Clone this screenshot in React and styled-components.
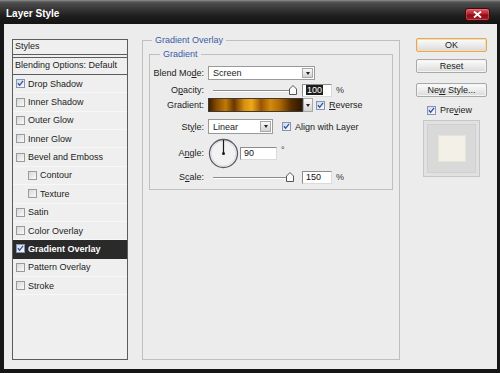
import React from 'react';
import styled, { createGlobalStyle } from 'styled-components';

const GlobalStyle = createGlobalStyle`
  html, body { margin: 0; padding: 0; background: #fff; }
  body { font-family: "Liberation Sans", Arial, sans-serif; font-size: 9px; color: #222; }
  * { box-sizing: border-box; }
`;

const Window = styled.div`
  width: 500px;
  height: 373px;
  display: flex;
  flex-direction: column;
  background: #161616;
  overflow: hidden;
`;

const TitleBar = styled.div`
  height: 24px;
  flex: none;
  display: flex;
  align-items: center;
  justify-content: space-between;
  padding: 0 10px 0 6px;
  background: linear-gradient(to bottom, #9a9a9a 0px, #6a6a6a 1px, #4c4c4c 3px, #333 10px, #1e1e1e 16px, #131313 24px);
`;

const Title = styled.span`
  color: #fff;
  font-weight: bold;
  font-size: 10px;
  margin-top: 2px;
`;

const CloseButton = styled.div`
  width: 25px;
  height: 13px;
  margin-top: 4px;
  border-radius: 3px;
  border: 1px solid #4a0608;
  background: linear-gradient(#d9626a, #b3222c 45%, #8c0c14 55%, #a8202a);
  box-shadow: inset 0 0 0 1px rgba(255, 160, 160, 0.3);
  display: flex;
  align-items: center;
  justify-content: center;
`;

const Frame = styled.div`
  flex: 1;
  display: flex;
  padding: 0 3px 4px 4px;
  min-height: 0;
`;

const Body = styled.div`
  flex: 1;
  display: flex;
  background: #ececec;
  padding: 11px 10px 9px 8px;
`;

/* ---------- left list ---------- */
const StyleList = styled.div`
  width: 116px;
  flex: none;
  margin-top: 4px;
  border: 1px solid #5c5c5c;
  background: #efefef;
  display: flex;
  flex-direction: column;
`;

const HeaderRow = styled.div`
  height: ${p => (p.$second ? 18 : 15)}px;
  flex: none;
  display: flex;
  align-items: center;
  padding: ${p => (p.$second ? '0 0 2px 2px' : '0 0 2px 2px')};
  border-bottom: 1px solid #5c5c5c;
  border-top: ${p => (p.$second ? '1px solid #5c5c5c' : 'none')};
  margin-top: ${p => (p.$second ? 2 : 0)}px;
  color: #222;
`;

const ItemRow = styled.div`
  height: 18.36px;
  flex: none;
  display: flex;
  align-items: center;
  gap: 3px;
  padding-left: ${p => (p.$indent ? 15 : 3)}px;
  background: ${p => (p.$selected ? '#2a2a2a' : 'transparent')};
  color: ${p => (p.$selected ? '#fff' : '#222')};
  font-weight: ${p => (p.$selected ? 'bold' : 'normal')};
  border-bottom: 1px solid ${p => (p.$selected ? '#2a2a2a' : '#f7f7f7')};
`;

const Box = styled.span`
  width: 9px;
  height: 9px;
  flex: none;
  border: 1px solid ${p => (p.$checked ? '#8294b8' : '#9a9a9a')};
  background: linear-gradient(135deg, #d8d8d8, #fafafa);
  display: flex;
  align-items: center;
  justify-content: center;
`;

const Checkbox = ({ checked }) => (
  <Box $checked={checked}>
    {checked && (
      <svg width="9" height="9" viewBox="0 0 9 9">
        <path d="M1.2 4.2 L3.4 6.8 L7.8 1.2" fill="none" stroke="#2b4fb5" strokeWidth="1.7" />
      </svg>
    )}
  </Box>
);

/* ---------- center groups ---------- */
const Group = styled.fieldset`
  margin: 0 0 0 14px;
  width: 258px;
  flex: none;
  min-width: 0;
  padding: 0 6px;
  border: 1px solid #bfbfbf;
`;

const InnerGroup = styled.fieldset`
  margin: 3px 0 0 0;
  min-width: 0;
  padding: 0 0 5px 0;
  border: 1px solid #bfbfbf;
`;

const Legend = styled.legend`
  padding: 0 3px;
  margin-left: ${p => p.$ml}px;
  color: #3b5ba8;
  font-size: 9px;
  line-height: 11px;
`;

const Controls = styled.div`
  display: flex;
  flex-direction: column;
  padding-top: 6px;
`;

const Row = styled.div`
  display: flex;
  align-items: center;
  height: ${p => p.$h}px;
  margin-top: ${p => p.$mt}px;
`;

const Label = styled.span`
  width: 54px;
  flex: none;
  text-align: right;
  margin-right: 4px;
  white-space: nowrap;
  color: #222;
`;

const U = styled.span`
  text-decoration: underline;
`;

const Select = styled.div`
  width: ${p => p.$w}px;
  height: ${p => p.$h}px;
  flex: none;
  background: #fff;
  border: 1px solid #9a9a9a;
  display: flex;
  align-items: center;
  justify-content: space-between;
  padding-left: 4px;
`;

const ArrowBox = styled.span`
  width: ${p => p.$w || 11}px;
  height: ${p => (p.$h ? `${p.$h}px` : 'calc(100% - 2px)')};
  margin-right: ${p => p.$mr ?? 1}px;
  flex: none;
  border: 1px solid #a8a8a8;
  background: linear-gradient(#fafafa, #d2d2d2);
  display: flex;
  align-items: center;
  justify-content: center;
  &::after {
    content: '';
    border-left: 2.5px solid transparent;
    border-right: 2.5px solid transparent;
    border-top: 3px solid #222;
  }
`;

const Swatch = styled.span`
  width: 95px;
  height: 14px;
  flex: none;
  border: 1px solid #3a3a3a;
  background: linear-gradient(
    to right,
    #3e2000 0%,
    #8a4a00 8%,
    #c07a08 18%,
    #6a3600 27%,
    #d89010 38%,
    #f0a818 46%,
    #9a5400 56%,
    #d48a0c 66%,
    #b06a04 76%,
    #5a2e00 88%,
    #2e1600 100%
  );
`;

const NumberInput = styled.span`
  width: ${p => p.$w}px;
  height: 13px;
  flex: none;
  margin-left: ${p => p.$ml}px;
  background: #fff;
  border: 1px solid;
  border-color: #8c8c8c #dadada #dadada #8c8c8c;
  padding-left: 3px;
  display: flex;
  align-items: center;
  font-size: 9px;
  color: #111;
`;

const Highlight = styled.span`
  background: #1c1c1c;
  color: #fff;
  padding: 0 1px;
  line-height: 10px;
`;

const Unit = styled.span`
  margin-left: 4px;
  align-self: ${p => (p.$top ? 'flex-start' : 'center')};
  margin-top: ${p => (p.$top ? 8 : 0)}px;
  color: #333;
`;

const Slider = styled.div`
  width: 90px;
  height: 100%;
  flex: none;
  position: relative;
  display: flex;
  align-items: center;
  padding: 0 5px;
`;

const Track = styled.div`
  flex: 1;
  height: 2px;
  margin-top: 2px;
  border-top: 1px solid #8c8c8c;
  border-bottom: 1px solid #fff;
`;

const Thumb = styled.svg`
  position: absolute;
  top: 2px;
`;

const CheckLabel = styled.span`
  display: flex;
  align-items: center;
  gap: 4px;
  margin-left: ${p => p.$ml}px;
  white-space: nowrap;
  color: #222;
`;

/* ---------- right column ---------- */
const Side = styled.div`
  width: 71px;
  flex: none;
  margin: 3px 0 0 16px;
  display: flex;
  flex-direction: column;
`;

const Button = styled.div`
  height: 14px;
  margin-top: ${p => p.$mt}px;
  border: 1px solid ${p => (p.$default ? '#e3a95c' : '#a9a9a9')};
  border-radius: 2px;
  background: linear-gradient(#fcfcfc, #ececec 50%, #dadada);
  box-shadow: ${p => (p.$default ? 'inset 0 0 0 1px #f6dcb0' : 'inset 0 0 0 1px #f4f4f4')};
  display: flex;
  align-items: center;
  justify-content: center;
  color: #222;
  font-size: 9px;
`;

const PreviewRow = styled.div`
  height: 12px;
  margin-top: 7px;
  display: flex;
  align-items: center;
  gap: 4px;
  padding-left: 11px;
`;

const PreviewBox = styled.div`
  width: 57px;
  height: 57px;
  margin: 4px 0 0 7px;
  border: 1px solid #c6c6c6;
  background: #d9d9d9;
  box-shadow: inset 0 0 0 3px #e1e1e1, inset 0 0 0 4px #d0d0d0;
  display: flex;
  align-items: center;
  justify-content: center;
`;

const PreviewSwatch = styled.div`
  width: 28px;
  height: 27px;
  background: #f3f1e7;
  border: 1px solid #e6e3d8;
`;

const SliderThumb = ({ left }) => (
  <Thumb width="8" height="10" viewBox="0 0 8 10" style={{ left }}>
    <path d="M4 0.5 L7.5 4 L7.5 9.5 L0.5 9.5 L0.5 4 Z" fill="#fafafa" stroke="#555" strokeWidth="1" />
  </Thumb>
);

const Dial = () => (
  <svg width="31" height="31" viewBox="0 0 31 31" style={{ flex: 'none' }}>
    <circle cx="15.5" cy="15.5" r="14" fill="#f2f2f2" stroke="#5a5a66" strokeWidth="1.3" />
    <circle cx="15.5" cy="15.5" r="12.4" fill="none" stroke="#dcdcdc" strokeWidth="1" />
    <line x1="15.5" y1="15.5" x2="15.5" y2="1.8" stroke="#1a1a1a" strokeWidth="1.2" />
    <circle cx="15.5" cy="15.5" r="1.5" fill="#1a1a1a" />
  </svg>
);

const items = [
  { label: 'Drop Shadow', checked: true },
  { label: 'Inner Shadow' },
  { label: 'Outer Glow' },
  { label: 'Inner Glow' },
  { label: 'Bevel and Emboss' },
  { label: 'Contour', indent: true },
  { label: 'Texture', indent: true },
  { label: 'Satin' },
  { label: 'Color Overlay' },
  { label: 'Gradient Overlay', checked: true, selected: true },
  { label: 'Pattern Overlay' },
  { label: 'Stroke' },
];

export default function App() {
  return (
    <>
      <GlobalStyle />
      <Window>
        <TitleBar>
          <Title>Layer Style</Title>
          <CloseButton>
            <svg width="9" height="7" viewBox="0 0 9 7">
              <path d="M1 0.5 L8 6.5 M8 0.5 L1 6.5" stroke="#fff" strokeWidth="1.8" />
            </svg>
          </CloseButton>
        </TitleBar>
        <Frame>
          <Body>
            <StyleList>
              <HeaderRow>Styles</HeaderRow>
              <HeaderRow $second>Blending Options: Default</HeaderRow>
              {items.map(it => (
                <ItemRow key={it.label} $indent={it.indent} $selected={it.selected}>
                  <Checkbox checked={it.checked} />
                  {it.label}
                </ItemRow>
              ))}
            </StyleList>

            <Group>
              <Legend $ml={3}>Gradient Overlay</Legend>
              <InnerGroup>
                <Legend $ml={10}>Gradient</Legend>
                <Controls>
                  <Row $h={14} $mt={0}>
                    <Label>Blend Mo<U>d</U>e:</Label>
                    <Select $w={107} $h={14}>
                      Screen
                      <ArrowBox />
                    </Select>
                  </Row>
                  <Row $h={14} $mt={3}>
                    <Label>O<U>p</U>acity:</Label>
                    <Slider>
                      <Track />
                      <SliderThumb left={81} />
                    </Slider>
                    <NumberInput $w={30} $ml={4}>
                      <Highlight>100</Highlight>
                    </NumberInput>
                    <Unit>%</Unit>
                  </Row>
                  <Row $h={14} $mt={1}>
                    <Label>Gradient:</Label>
                    <Swatch />
                    <ArrowBox $w={10} $h={14} $mr={0} />
                    <CheckLabel $ml={3}>
                      <Checkbox checked />
                      <span><U>R</U>everse</span>
                    </CheckLabel>
                  </Row>
                  <Row $h={15} $mt={7}>
                    <Label>St<U>y</U>le:</Label>
                    <Select $w={65} $h={15}>
                      Linear
                      <ArrowBox />
                    </Select>
                    <CheckLabel $ml={9}>
                      <Checkbox checked />
                      <span>Ali<U>g</U>n with Layer</span>
                    </CheckLabel>
                  </Row>
                  <Row $h={32} $mt={3}>
                    <Label>A<U>n</U>gle:</Label>
                    <Dial />
                    <NumberInput $w={37} $ml={1}>90</NumberInput>
                    <Unit $top>°</Unit>
                  </Row>
                  <Row $h={14} $mt={1}>
                    <Label>S<U>c</U>ale:</Label>
                    <Slider>
                      <Track />
                      <SliderThumb left={78} />
                    </Slider>
                    <NumberInput $w={30} $ml={4}>150</NumberInput>
                    <Unit>%</Unit>
                  </Row>
                </Controls>
              </InnerGroup>
            </Group>

            <Side>
              <Button $default $mt={0}>OK</Button>
              <Button $mt={7}>Reset</Button>
              <Button $mt={10}>Ne<U>w</U>&nbsp;Style...</Button>
              <PreviewRow>
                <Checkbox checked />
                <span>Pre<U>v</U>iew</span>
              </PreviewRow>
              <PreviewBox>
                <PreviewSwatch />
              </PreviewBox>
            </Side>
          </Body>
        </Frame>
      </Window>
    </>
  );
}
